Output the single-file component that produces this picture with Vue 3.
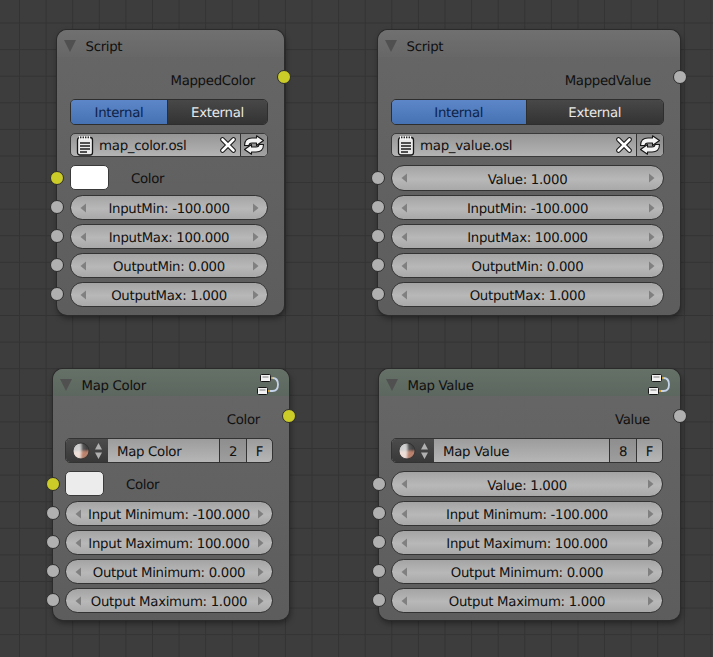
<script setup>
const pills = (a, b, c, d) => [a, b, c, d].map((text) => ({ type: 'pill', text, socket: 'grey' }))

const nodes = [
  {
    title: 'Script', x: 57, y: 30, w: 227, h: 285, padL: 13, padR: 16, tint: false,
    out: 'MappedColor', outSocket: 'yellow',
    top: [{ type: 'tabs' }, { type: 'file', name: 'map_color.osl' }],
    inputs: [
      { type: 'swatch', text: 'Color', socket: 'yellow', white: true },
      ...pills('InputMin: -100.000', 'InputMax: 100.000', 'OutputMin: 0.000', 'OutputMax: 1.000')
    ]
  },
  {
    title: 'Script', x: 378, y: 30, w: 302, h: 285, padL: 13, padR: 16, tint: false,
    out: 'MappedValue', outSocket: 'grey',
    top: [{ type: 'tabs' }, { type: 'file', name: 'map_value.osl' }],
    inputs: [
      { type: 'pill', text: 'Value: 1.000', socket: 'grey', tall: true },
      ...pills('InputMin: -100.000', 'InputMax: 100.000', 'OutputMin: 0.000', 'OutputMax: 1.000')
    ]
  },
  {
    title: 'Map Color', x: 53, y: 369, w: 236, h: 251, padL: 12, padR: 16, tint: true,
    out: 'Color', outSocket: 'yellow',
    top: [{ type: 'preset', name: 'Map Color', users: '2' }],
    inputs: [
      { type: 'swatch', text: 'Color', socket: 'yellow', white: false },
      ...pills('Input Minimum: -100.000', 'Input Maximum: 100.000', 'Output Minimum: 0.000', 'Output Maximum: 1.000')
    ]
  },
  {
    title: 'Map Value', x: 379, y: 369, w: 301, h: 251, padL: 12, padR: 17, tint: true,
    out: 'Value', outSocket: 'grey',
    top: [{ type: 'preset', name: 'Map Value', users: '8' }],
    inputs: [
      { type: 'pill', text: 'Value: 1.000', socket: 'grey', tall: true },
      ...pills('Input Minimum: -100.000', 'Input Maximum: 100.000', 'Output Minimum: 0.000', 'Output Maximum: 1.000')
    ]
  }
]

const nodeStyle = (n) => ({
  left: n.x + 'px',
  top: n.y + 'px',
  width: n.w + 'px',
  height: n.h + 'px',
  paddingLeft: n.padL + 'px',
  paddingRight: n.padR + 'px',
  '--pad-l': n.padL + 'px',
  '--pad-r': n.padR + 'px'
})
</script>

<template>
  <div class="canvas">
    <section v-for="n in nodes" :key="n.title + n.x" class="node" :style="nodeStyle(n)">
      <header class="head" :class="{ tint: n.tint }">
        <span class="caret"></span>
        <span class="title">{{ n.title }}</span>
        <svg v-if="n.tint" class="group-icon" width="22" height="22" viewBox="0 0 22 22">
          <path d="M12 4h3.500c4.500 0 5.500 2.500 5.500 6.500s-1 6.500-5.500 6.500H10" fill="none" stroke="#c5d3ea" stroke-width="1.800" />
          <path d="M12.500 4h3M10 17h3" stroke="#c79a2e" stroke-width="2.200" />
          <rect x="3.500" y="0.500" width="10" height="7" rx="1" fill="#f2f2f2" stroke="#161616" />
          <rect x="0.500" y="13.500" width="10" height="7" rx="1" fill="#f2f2f2" stroke="#161616" />
          <path d="M5.500 3h6M2.500 16h6" stroke="#7d7d7d" stroke-width="1.200" />
        </svg>
      </header>

      <div class="output">
        <span>{{ n.out }}</span>
        <i class="socket right" :class="n.outSocket"></i>
      </div>

      <div class="top-rows">
        <template v-for="(r, i) in n.top" :key="i">
          <div v-if="r.type === 'tabs'" class="tabs">
            <span class="tab on">Internal</span>
            <span class="tab">External</span>
          </div>

          <div v-else-if="r.type === 'file'" class="file">
            <div class="file-main">
              <svg width="18" height="21" viewBox="0 0 18 21">
                <rect x="1.500" y="2.500" width="15" height="17.500" rx="2.500" fill="#eaeaea" stroke="#161616" stroke-width="1.300" />
                <path d="M4 8h10M4 11h10M4 14h10M4 17h7" stroke="#1c1c1c" stroke-width="1.500" />
                <path d="M3.500 1v4M6 1v4M8.500 1v4M11 1v4M13.500 1v4" stroke="#f5f5f5" stroke-width="1.200" />
              </svg>
              <span class="file-name">{{ r.name }}</span>
              <svg class="clear" width="16" height="16" viewBox="0 0 16 16">
                <path d="M2.500 2.500l11 11M13.500 2.500l-11 11" stroke="#181818" stroke-width="4.600" stroke-linecap="round" />
                <path d="M2.500 2.500l11 11M13.500 2.500l-11 11" stroke="#fff" stroke-width="2.600" stroke-linecap="round" />
              </svg>
            </div>
            <div class="file-reload">
              <svg width="22" height="20" viewBox="0 0 22 20">
                <path d="M1.500 10.500C1.500 5 4.500 3 9 3h4.500V0.800l7 4.700-7 5V8H9c-2 0-3 1-3 2.500z" fill="#f4f4f4" stroke="#161616" stroke-width="1.100" stroke-linejoin="round" />
                <path transform="rotate(180 11 10)" d="M1.500 10.500C1.500 5 4.500 3 9 3h4.500V0.800l7 4.700-7 5V8H9c-2 0-3 1-3 2.500z" fill="#f4f4f4" stroke="#161616" stroke-width="1.100" stroke-linejoin="round" />
              </svg>
            </div>
          </div>

          <div v-else class="preset">
            <div class="browse">
              <svg width="18" height="18" viewBox="0 0 18 18">
                <defs>
                  <radialGradient id="sphere-shade" cx="0.4" cy="0.35" r="0.7">
                    <stop offset="0" stop-color="#fff" stop-opacity="0.3" />
                    <stop offset="0.7" stop-color="#fff" stop-opacity="0" />
                    <stop offset="1" stop-color="#000" stop-opacity="0.45" />
                  </radialGradient>
                  <clipPath id="sphere-clip"><circle cx="9" cy="9" r="8" /></clipPath>
                  <filter id="sphere-soft" x="-20%" y="-20%" width="140%" height="140%">
                    <feGaussianBlur stdDeviation="0.8" />
                  </filter>
                </defs>
                <g clip-path="url(#sphere-clip)">
                  <g filter="url(#sphere-soft)">
                    <rect x="0" y="0" width="9" height="9" fill="#c4c4c4" />
                    <rect x="9" y="0" width="9" height="9" fill="#3c3c3c" />
                    <rect x="0" y="9" width="9" height="9" fill="#ecdcd4" />
                    <rect x="9" y="9" width="9" height="9" fill="#bb7f68" />
                  </g>
                  <circle cx="9" cy="9" r="8" fill="url(#sphere-shade)" />
                </g>
                <circle cx="9" cy="9" r="8" fill="none" stroke="#2e2e2e" stroke-width="0.800" />
              </svg>
              <svg width="9" height="18" viewBox="0 0 9 18">
                <path d="M4.500 1L8 7.500H1zM4.500 17L1 10.500h7z" fill="#b0b0b0" />
              </svg>
            </div>
            <span class="preset-name">{{ r.name }}</span>
            <span class="preset-cell users">{{ r.users }}</span>
            <span class="preset-cell last">F</span>
          </div>
        </template>
      </div>

      <div class="inputs">
        <template v-for="(r, i) in n.inputs" :key="i">
          <div v-if="r.type === 'swatch'" class="swatch-row">
            <i class="socket left" :class="r.socket"></i>
            <span class="swatch" :class="{ pure: r.white }"></span>
            <span class="swatch-label">{{ r.text }}</span>
          </div>
          <div v-else class="pill" :class="{ tall: r.tall }">
            <i class="socket left" :class="r.socket"></i>
            <svg width="7" height="10" viewBox="0 0 7 10"><path d="M6 0.500v9L0.500 5z" fill="#808080" /></svg>
            <span class="pill-text">{{ r.text }}</span>
            <svg width="7" height="10" viewBox="0 0 7 10"><path d="M1 0.500v9L6.500 5z" fill="#808080" /></svg>
          </div>
        </template>
      </div>
    </section>
  </div>
</template>

<style>
body {
  margin: 0;
  background: #3d3d3d;
}
</style>

<style scoped>
.canvas {
  position: relative;
  width: 713px;
  height: 657px;
  overflow: hidden;
  background-color: #3d3d3d;
  background-image:
    linear-gradient(to right, #333 1px, transparent 1px),
    linear-gradient(to bottom, #333 1px, transparent 1px);
  background-size: 26.6px 26.6px;
  background-position: 19px 22.500px;
  font-family: "DejaVu Sans", sans-serif;
  font-size: 13.300px;
  letter-spacing: -0.3px;
  text-rendering: geometricPrecision;
  color: #101010;
}
.node {
  position: absolute;
  box-sizing: border-box;
  display: flex;
  flex-direction: column;
  border-radius: 10px;
  background: linear-gradient(to bottom, rgba(104, 104, 104, 0.96), rgba(94, 94, 94, 0.96));
  box-shadow: 0 0 0 1px #2b2b2b, 1px 3px 6px rgba(0, 0, 0, 0.45);
}
.head {
  display: flex;
  align-items: center;
  box-sizing: border-box;
  height: 27px;
  flex: none;
  margin-left: calc(var(--pad-l) * -1);
  margin-right: calc(var(--pad-r) * -1);
  padding: 5px 10px 0 7px;
  border-radius: 10px 10px 0 0;
  background: linear-gradient(to bottom, #707070, #676767);
}
.head.tint {
  background: linear-gradient(to bottom, #657067, #5c675f);
}
.caret {
  width: 0;
  height: 0;
  border-left: 6.500px solid transparent;
  border-right: 6.500px solid transparent;
  border-top: 12px solid #505050;
}
.title {
  margin-left: 9.500px;
  padding-top: 2px;
}
.group-icon {
  margin-left: auto;
}
.output {
  position: relative;
  display: flex;
  justify-content: flex-end;
  align-items: center;
  box-sizing: border-box;
  flex: none;
  height: 26px;
  margin: 10px 13px 6px 0;
  padding-top: 2px;
}
.socket {
  position: absolute;
  box-sizing: border-box;
  width: 14px;
  height: 14px;
  border-radius: 50%;
  border: 1px solid #2d2d2d;
}
.socket.grey {
  background: #b0b0b0;
}
.socket.yellow {
  background: #cccc28;
}
.socket.left {
  left: calc(var(--pad-l) * -1 - 7px);
  top: 6px;
}
.pill .socket.left {
  left: calc(var(--pad-l) * -1 - 8px);
  top: 4px;
}
.pill.tall .socket.left {
  top: 5px;
}
.socket.right {
  right: calc(-13px - var(--pad-r) - 7px);
  top: 3px;
}
.top-rows {
  display: flex;
  flex-direction: column;
  gap: 8px;
  margin-bottom: 8px;
  flex: none;
}
.tabs {
  display: flex;
  height: 26px;
  box-sizing: border-box;
  border: 1px solid #2e2e2e;
  border-radius: 5px;
  overflow: hidden;
}
.tab {
  flex: 1;
  display: flex;
  align-items: center;
  justify-content: center;
  box-sizing: border-box;
  padding-top: 3px;
  color: #e8e8e8;
  background: linear-gradient(to bottom, #484848, #333);
}
.tab.on {
  flex: 0 0 calc(50% - 1px);
  color: #0e2347;
  border-right: 1px solid #2e2e2e;
  background: linear-gradient(to bottom, #5c86c8, #4672b4);
}
.file {
  display: flex;
  height: 24px;
  box-sizing: border-box;
  border: 1px solid #3a3a3a;
  border-radius: 5px;
  overflow: hidden;
  background: linear-gradient(to bottom, #969696, #b4b4b4);
}
.file-main {
  flex: 1;
  display: flex;
  align-items: center;
  padding: 0 4px 0 5px;
  min-width: 0;
}
.file-name {
  margin-left: 5px;
  padding-top: 3px;
  font-size: 13.400px;
}
.clear {
  margin-left: auto;
}
.file-reload {
  flex: none;
  width: 26px;
  display: flex;
  align-items: center;
  justify-content: center;
  border-left: 1px solid #333;
  background: linear-gradient(to bottom, #8a8a8a, #a2a2a2);
}
.preset {
  display: flex;
  height: 25px;
  box-sizing: border-box;
  border: 1px solid #333;
  border-radius: 5px;
  overflow: hidden;
  background: linear-gradient(to bottom, #9c9c9c, #b6b6b6);
}
.browse {
  flex: none;
  width: 42px;
  display: flex;
  align-items: center;
  justify-content: center;
  gap: 4px;
  background: linear-gradient(to bottom, #4c4c4c, #383838);
}
.preset-name {
  flex: 1;
  display: flex;
  align-items: center;
  padding: 4px 0 0 9px;
}
.preset-cell {
  flex: none;
  width: 27px;
  display: flex;
  align-items: center;
  justify-content: center;
  box-sizing: border-box;
  padding-top: 4px;
  border-left: 1px solid #333;
}
.preset-cell.last {
  width: 26px;
}
.preset-cell.users {
  background: linear-gradient(to bottom, #8e8e8e, #9e9e9e);
}
.inputs {
  display: flex;
  flex-direction: column;
  gap: 4px;
}
.swatch-row {
  position: relative;
  display: flex;
  align-items: center;
  height: 26px;
}
.swatch {
  box-sizing: border-box;
  align-self: flex-start;
  width: 39px;
  height: 25px;
  border: 1px solid #3a3a3a;
  border-radius: 5px;
  background: #ececec;
}
.swatch.pure {
  background: #fff;
}
.swatch-label {
  margin-left: 22px;
  padding-top: 3px;
}
.pill {
  position: relative;
  display: flex;
  align-items: center;
  box-sizing: border-box;
  height: 25px;
  padding: 0 8.500px;
  border: 1px solid #333;
  border-radius: 13px;
  background: linear-gradient(to bottom, #a4a4a4, #b8b8b8 55%, #a8a8a8);
}
.pill.tall {
  height: 26px;
}
.pill-text {
  flex: 1;
  padding-top: 4px;
  text-align: center;
  white-space: nowrap;
}
</style>
